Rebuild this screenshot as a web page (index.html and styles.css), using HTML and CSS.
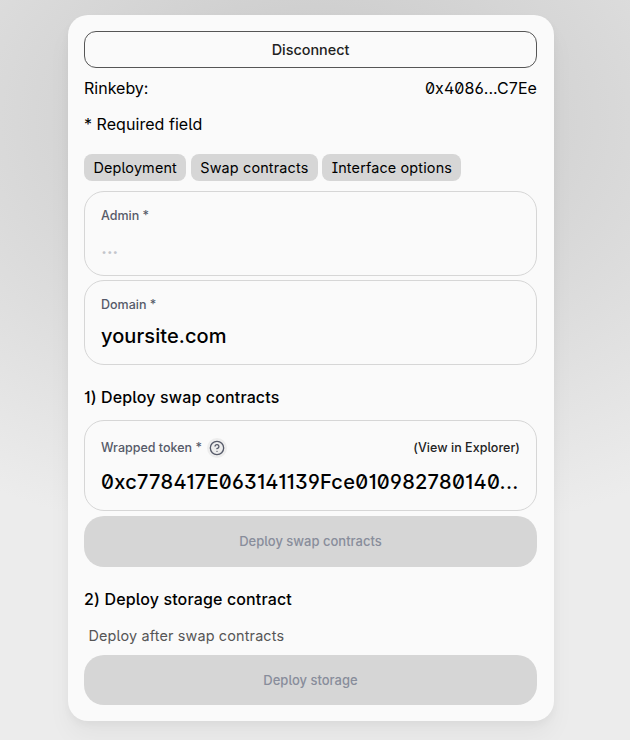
FILE: index.html
```html
<!DOCTYPE html>
<html lang="en">
<head>
<meta charset="utf-8">
<title>Deployment</title>
<link rel="stylesheet" href="styles.css">
</head>
<body>
<main class="card">
  <button class="disconnect">Disconnect</button>
  <div class="network"><span>Rinkeby:</span><span class="account">0x4086...C7Ee</span></div>
  <p class="required">* Required field</p>
  <nav class="tabs"><button class="tab">Deployment</button><button class="tab">Swap contracts</button><button class="tab">Interface options</button></nav>
  <section class="field"><div class="label">Admin *</div><div class="value placeholder">...</div></section>
  <section class="field"><div class="label">Domain *</div><div class="value">yoursite.com</div></section>
  <h2 class="title">1) Deploy swap contracts</h2>
  <section class="field token">
    <div class="label-row">
      <div class="label">Wrapped token *</div>
      <span class="help"><svg width="16" height="16" viewBox="0 0 24 24" fill="none" stroke="currentColor" stroke-width="2" stroke-linecap="round" stroke-linejoin="round"><circle cx="12" cy="12" r="10"/><path d="M9.09 9a3 3 0 0 1 5.83 1c0 2-3 3-3 3"/><path d="M12 17h.01"/></svg></span>
      <a class="explorer">(View in Explorer)</a>
    </div>
    <div class="value">0xc778417E063141139Fce010982780140...</div>
  </section>
  <button class="deploy">Deploy swap contracts</button>
  <h2 class="title storage">2) Deploy storage contract</h2>
  <p class="note">Deploy after swap contracts</p>
  <button class="deploy last">Deploy storage</button>
</main>
</body>
</html>
```
FILE: styles.css
```css
* { box-sizing: border-box; }
html { background: #ececec; }
body {
  margin: 0;
  height: 740px;
  padding: 15px 76px 0 68px;
  overflow: hidden;
  background: radial-gradient(ellipse 630px 430px at 50% 120px, #c6c6c6, #ececec);
  font-family: Inter, "Liberation Sans", sans-serif;
  font-size: 16px;
  line-height: 20px;
  font-optical-sizing: none;
  font-feature-settings: "ss01" 1, "ss02" 1, "cv01" 1, "cv03" 1;
  color: #000;
}
button { font: inherit; font-optical-sizing: none; font-feature-settings: inherit; color: inherit; border: 0; padding: 0; }
.card {
  height: 706px;
  padding: 16px 17px 16px 16px;
  border-radius: 20px;
  background: #fafafa;
  box-shadow: 0 0 1px rgba(0,0,0,.01), 0 4px 8px rgba(0,0,0,.04), 0 16px 24px rgba(0,0,0,.04);
}
.disconnect {
  display: block;
  width: 100%;
  height: 37px;
  border: 1px solid #565656;
  border-radius: 12px;
  background: transparent;
  color: #222;
  font-size: 14.4px;
  font-weight: 500;
}
.network { display: flex; justify-content: space-between; margin-top: 10px; }
.account { letter-spacing: .06px; }
.required { margin: 16px 0 20px; letter-spacing: .05px; }
.tabs { display: flex; gap: 4.5px; height: 27px; margin-bottom: 10px; }
.tab { height: 27px; padding: 0 9.4px; border-radius: 8px; background: #d6d6d6; font-size: 14.4px; letter-spacing: .16px; }
.field {
  height: 85px;
  margin-bottom: 4px;
  padding: 16px;
  border: 1px solid #d6d6d6;
  border-radius: 20px;
}
.label { font-size: 12.5px; line-height: 16px; font-weight: 500; color: #565a69; }
.value { margin-top: 10px; font-size: 20px; line-height: 26px; font-weight: 500; letter-spacing: .08px; white-space: nowrap; }
.placeholder { color: #c3c5cb; letter-spacing: -.4px; }
.title { margin: 22px 0 13px; font-size: 16px; line-height: 20px; font-weight: 500; letter-spacing: .14px; }
.token { height: 91px; margin-bottom: 5px; padding-top: 17px; }
.token .value { margin-top: 11px; letter-spacing: .28px; }
.label-row { display: flex; align-items: center; height: 20px; }
.help { display: flex; align-items: center; justify-content: center; width: 20px; height: 20px; margin-left: 5px; border-radius: 50%; background: #ededed; color: #565a69; }
.explorer { margin-left: auto; font-size: 12.5px; font-weight: 500; letter-spacing: .04px; color: #222; }
.deploy { display: block; width: 100%; height: 51px; padding-bottom: 1px; border-radius: 20px; background: #d6d6d6; color: #888d9b; font-size: 13px; font-weight: 500; }
.storage { margin-bottom: 17px; }
.note { margin: 0 0 9px 4.5px; font-size: 14.4px; letter-spacing: .16px; color: #565656; }
.last { height: 50px; padding: 0; }
```
